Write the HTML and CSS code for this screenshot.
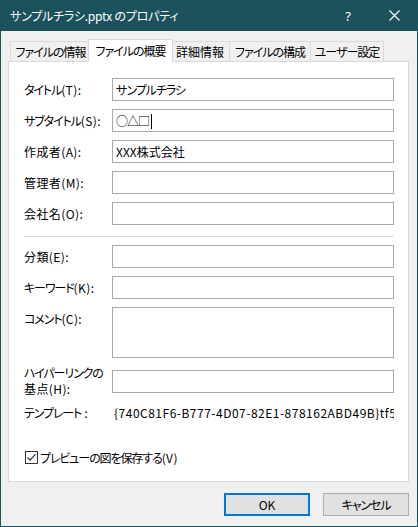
FILE: index.html
```html
<!DOCTYPE html>
<html lang="ja">
<head>
<meta charset="utf-8">
<title>サンプルチラシ.pptx のプロパティ</title>
<link rel="stylesheet" href="styles.css">
</head>
<body>
<div class="window">
  <div class="titlebar">
    <span class="title">サンプルチラシ.pptx のプロパティ</span>
    <span class="tb-btn help">?</span>
    <span class="tb-btn close"><svg width="11" height="11" viewBox="0 0 11 11"><path d="M0.5 0.5L10.5 10.5M10.5 0.5L0.5 10.5" stroke="#ffffff" stroke-width="1.1" fill="none"/></svg></span>
  </div>
  <div class="client">
    <div class="tabs">
      <div class="tab t1">ファイルの情報</div>
      <div class="tab active">ファイルの概要</div>
      <div class="tab t3">詳細情報</div>
      <div class="tab t4">ファイルの構成</div>
      <div class="tab t5">ユーザー設定</div>
    </div>
    <div class="panel">
      <div class="form">
        <div class="lbl"><span class="k">タイトル</span>(T):</div><div class="field narrow">サンプルチラシ</div>
        <div class="lbl"><span class="k">サブタイトル</span>(S):</div><div class="field narrow">○△□<span class="caret"></span></div>
        <div class="lbl">作成者(A):</div><div class="field">XXX株式会社</div>
        <div class="lbl">管理者(M):</div><div class="field"></div>
        <div class="lbl">会社名(O):</div><div class="field"></div>
        <div class="sep"></div>
        <div class="lbl">分類(E):</div><div class="field"></div>
        <div class="lbl"><span class="k">キーワード</span>(K):</div><div class="field"></div>
        <div class="lbl top"><span class="k">コメント</span>(C):</div><div class="field tall"></div>
        <div class="lbl two"><span class="k">ハイパーリンクの</span><br>基点(H):</div><div class="field"></div>
        <div class="lbl"><span class="k">テンプレート</span> :</div><div class="value">{740C81F6-B777-4D07-82E1-878162ABD49B}tf56000000</div>
      </div>
      <div class="check-row">
        <span class="checkbox"><svg width="11" height="11" viewBox="0 0 11 11"><path d="M1.5 5.5L4.2 8.2L9.5 2.2" stroke="#333333" stroke-width="1.2" fill="none"/></svg></span>
        <span class="check-label"><span class="k">プレビューの図を保存する</span>(V)</span>
      </div>
    </div>
    <div class="buttons">
      <div class="btn default">OK</div>
      <div class="btn"><span class="k">キャンセル</span></div>
    </div>
  </div>
</div>
</body>
</html>
```

FILE: styles.css
```css
* { box-sizing: border-box; }

html, body {
  margin: 0;
  padding: 0;
  background: #f0f0f0;
}

body {
  font-family: "Noto Sans CJK JP", "Noto Sans", sans-serif;
  font-size: 12px;
  font-feature-settings: "palt";
  color: #000;
}

.window {
  width: 418px;
  height: 527px;
  border: 1px solid #1b525b;
  border-top: 0;
  background: #f0f0f0;
  display: flex;
  flex-direction: column;
}

.titlebar {
  height: 31px;
  background: #1b525b;
  color: #fff;
  display: flex;
  align-items: center;
  padding-left: 9px;
}

.title {
  flex: 1;
  font-size: 12px;
  line-height: 16px;
  letter-spacing: -0.2px;
}

.tb-btn {
  width: 46px;
  height: 31px;
  display: flex;
  align-items: center;
  justify-content: center;
}

.help {
  font-family: "Noto Sans", sans-serif;
  font-size: 13px;
}

.client {
  padding: 8px 8px 0 7px;
}

.tabs {
  display: flex;
  align-items: flex-end;
  height: 22px;
  padding-left: 2px;
}

.tab {
  height: 20px;
  border: 1px solid #d9d9d9;
  border-bottom: 0;
  background: #f0f0f0;
  display: flex;
  align-items: center;
  justify-content: center;
  line-height: 15px;
  white-space: nowrap;
  letter-spacing: -1px;
}

.t1 { width: 81px; }
.t3 { width: 60px; letter-spacing: 0; }
.t4 { width: 82px; margin-left: -1px; }
.t5 { width: 74px; margin-left: -1px; }

.tab.active {
  position: relative;
  z-index: 1;
  width: 85px;
  height: 23px;
  margin: 0 -3px -1px -3px;
  background: #fff;
  padding-bottom: 2px;
}

.panel {
  width: 401px;
  height: 421px;
  border: 1px solid #d9d9d9;
  background: #fff;
  padding: 16px 13px 0 15px;
}

.form {
  display: grid;
  grid-template-columns: 88px 282px;
  row-gap: 8px;
  align-items: center;
}

.lbl {
  line-height: 15px;
  white-space: nowrap;
  letter-spacing: 0.4px;
}

.lbl.two {
  line-height: 16px;
  margin-top: -1px;
}

.k {
  letter-spacing: -1.1px;
}

.lbl.top {
  align-self: start;
  padding-top: 4px;
}

.field {
  height: 23px;
  border: 1px solid #a9a9a9;
  background: #fff;
  padding: 0 3px;
  line-height: 21px;
  white-space: nowrap;
}

.field.narrow {
  letter-spacing: -1px;
}

.field.tall {
  height: 51px;
}

.caret {
  display: inline-block;
  width: 1px;
  height: 15px;
  background: #000;
  vertical-align: -3px;
  margin-left: 2px;
}

.sep {
  grid-column: 1 / -1;
  height: 1px;
  background: #dcdcdc;
  margin-top: 3px;
}

.value {
  line-height: 15px;
  white-space: nowrap;
  overflow: hidden;
  padding-left: 2px;
  letter-spacing: 0.5px;
}

.check-row {
  display: flex;
  align-items: center;
  margin-top: 30px;
  padding-left: 1px;
  line-height: 15px;
}

.check-label {
  letter-spacing: 0.4px;
}

.checkbox {
  width: 13px;
  height: 13px;
  border: 1px solid #333;
  background: #fff;
  display: flex;
  align-items: center;
  justify-content: center;
  margin-right: 2px;
}

.buttons {
  display: flex;
  justify-content: flex-end;
  gap: 13px;
  margin-top: 11px;
}

.btn {
  width: 86px;
  height: 23px;
  border: 1px solid #adadad;
  background: #e1e1e1;
  display: flex;
  align-items: center;
  justify-content: center;
  line-height: 15px;
}

.btn.default {
  border: 2px solid #0078d7;
}
```
